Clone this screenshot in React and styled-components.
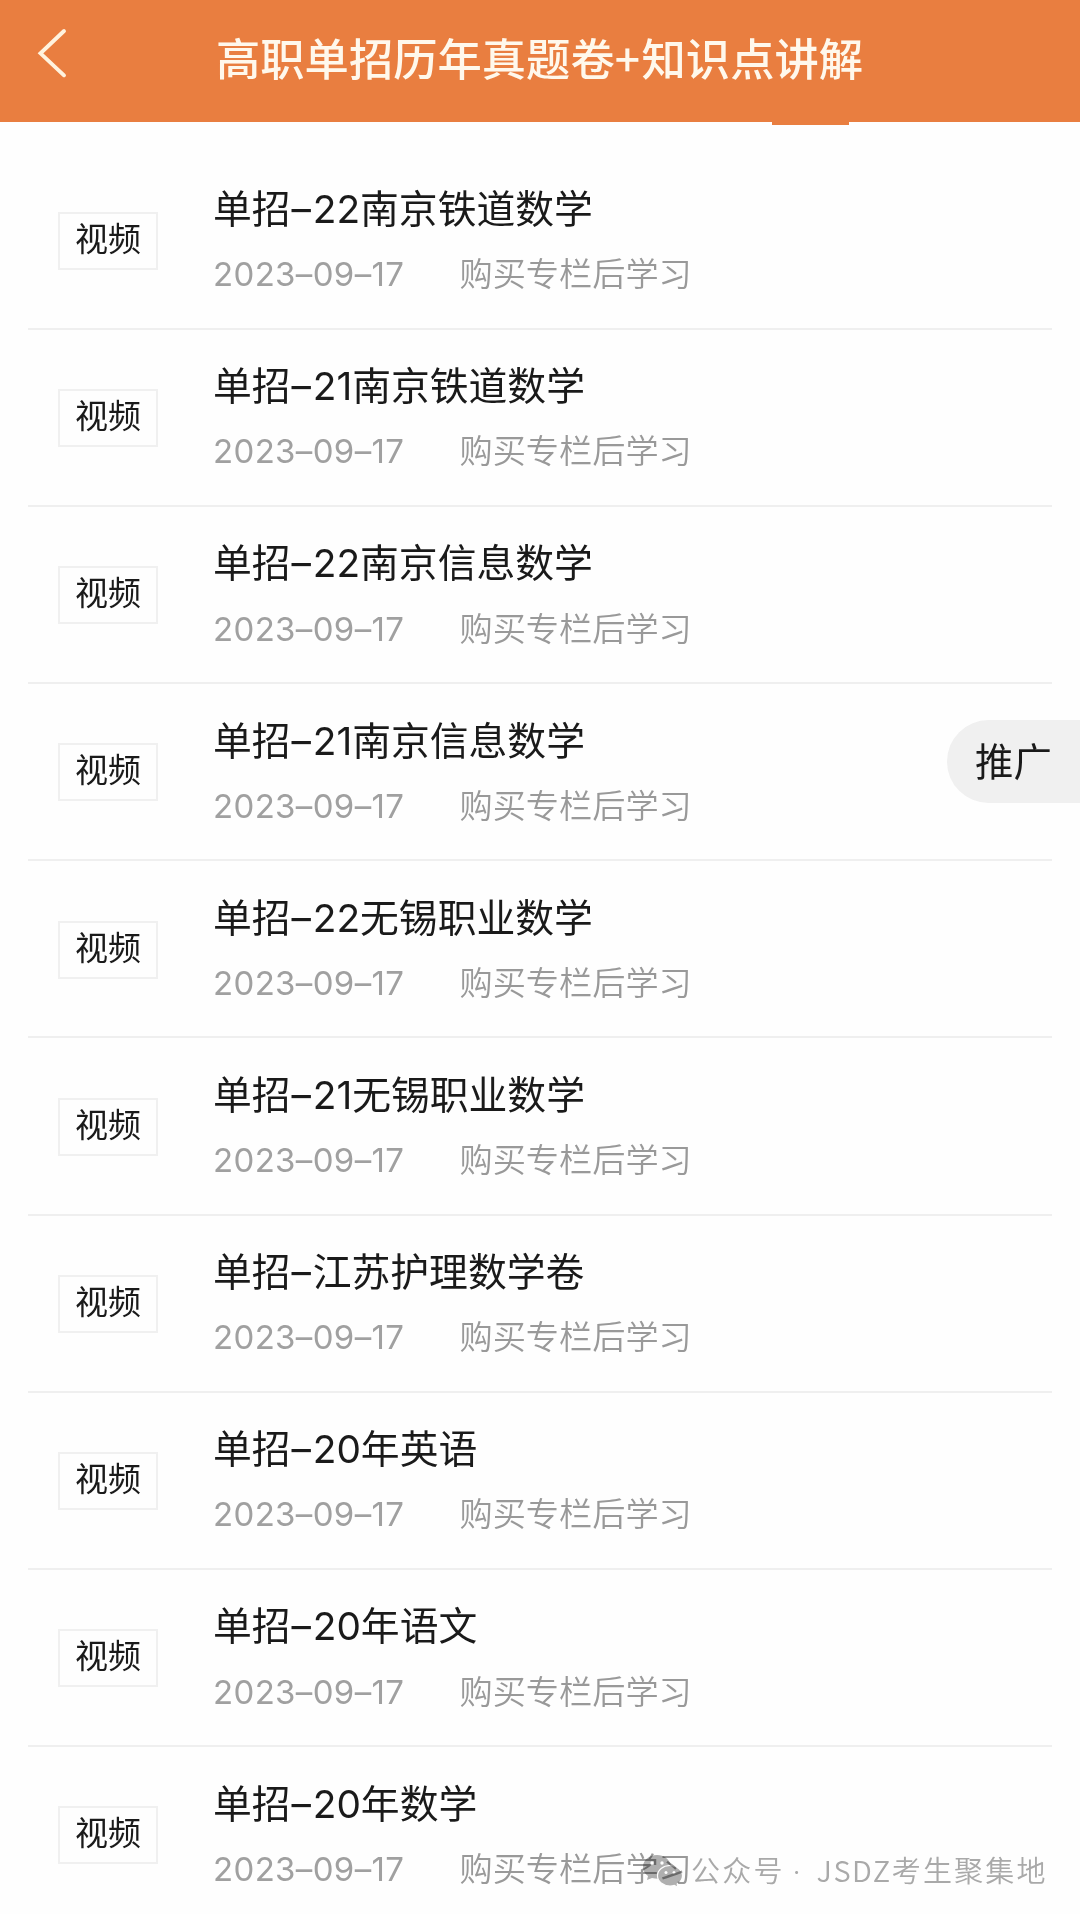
import React from "react";
import styled, { createGlobalStyle } from "styled-components";

const GlobalStyle = createGlobalStyle`
  * { box-sizing: border-box; }
  html, body { margin: 0; padding: 0; background: #fefefe; }
  body { font-family: Inter, "Noto Sans CJK SC", sans-serif; color: #1a1a1a; }
`;

const Page = styled.main`
  position: relative;
  width: 1080px;
  height: 1914px;
  overflow: hidden;
  background: #fefefe;
`;

const Header = styled.header`
  position: relative;
  display: flex;
  align-items: flex-start;
  height: 122px;
  background: #e97e40;
`;

const BackButton = styled.button`
  display: flex;
  width: 216px;
  padding: 28px 0 0 36px;
  border: 0;
  background: none;
`;

const PageTitle = styled.h1`
  margin: 0;
  padding-top: 25px;
  font-family: "Noto Sans CJK SC", sans-serif;
  font-size: 44.3px;
  font-weight: 500;
  line-height: 64px;
  white-space: nowrap;
  color: #fff8ec;
`;

const Plus = styled.span`
  letter-spacing: 1.6px;
`;

const TabIndicator = styled.span`
  position: absolute;
  left: 772px;
  top: 121px;
  width: 77px;
  height: 4px;
  background: #e97e40;
`;

const LessonList = styled.ul`
  margin: 0;
  padding: 30.4px 28px 0;
  list-style: none;
`;

const LessonRow = styled.li`
  display: flex;
  align-items: flex-start;
  height: 177.2px;
  padding-left: 30px;
  border-bottom: 2px solid #efefef;
`;

const Badge = styled.span`
  display: flex;
  justify-content: center;
  flex: none;
  width: 100px;
  height: 58px;
  margin: 59.4px 55px 0 0;
  border: 2px solid #f0f0f0;
  font-family: "Noto Sans CJK SC", sans-serif;
  font-size: 33px;
  line-height: 46px;
`;

const LessonInfo = styled.div`
  display: flex;
  flex-direction: column;
  padding-top: 30.6px;
  white-space: nowrap;
`;

const LessonTitle = styled.h2`
  margin: 0;
  font-size: 38.8px;
  font-weight: 400;
  line-height: 52px;
`;

const Dash = styled.span`
  margin-left: 1px;
  letter-spacing: 1.7px;
`;

const Meta = styled.div`
  display: flex;
  margin-top: 16.2px;
  font-size: 33.2px;
  font-weight: 350;
  line-height: 46px;
  color: #999;
`;

const DateText = styled.time`
  width: 246.5px;
  font-size: 33px;
  font-weight: 400;
  letter-spacing: 0.35px;
  color: #a0a0a0;
`;

const PromoButton = styled.button`
  position: absolute;
  top: 720px;
  right: 0;
  width: 133px;
  height: 83px;
  padding: 0 0 6px 28px;
  border: 0;
  border-radius: 42px 0 0 42px;
  background: #f0f0f0;
  font-family: "Noto Sans CJK SC", sans-serif;
  font-size: 38.4px;
  text-align: left;
  color: #1a1a1a;
`;

const Watermark = styled.div`
  position: absolute;
  left: 642px;
  top: 1847px;
  display: flex;
  align-items: center;
  font-family: "Noto Sans CJK SC", sans-serif;
  font-size: 29px;
  font-weight: 350;
  line-height: 44px;
  letter-spacing: 2.2px;
  white-space: pre;
  color: #aaa;
  mix-blend-mode: multiply;
`;

const WatermarkText = styled.span`
  margin-left: 8px;
`;

const Dot = styled.span`
  display: inline-block;
  width: 32px;
  padding-left: 8px;
  font-family: Inter, sans-serif;
`;

const Latin = styled.span`
  letter-spacing: 1.5px;
`;

const lessons = [
  "22南京铁道数学",
  "21南京铁道数学",
  "22南京信息数学",
  "21南京信息数学",
  "22无锡职业数学",
  "21无锡职业数学",
  "江苏护理数学卷",
  "20年英语",
  "20年语文",
  "20年数学",
];

function BackIcon() {
  return (
    <svg width="32" height="52" viewBox="0 0 32 52" fill="none">
      <path
        d="M28 3 4.500 25.300 28 47.300"
        stroke="#fff3df"
        strokeWidth="3.900"
        strokeLinecap="round"
      />
    </svg>
  );
}

function ChatIcon() {
  return (
    <svg width="41" height="34" viewBox="0 0 41 34">
      <path
        fill="#b0b0b0"
        d="M15 1C7 1 1 6 1 13c0 4 2 7 5 9l-1 4 5-2c2 .6 4 .8 6 .8h10V11h3C27 5 22 1 15 1Z"
      />
      <path
        fill="#b0b0b0"
        stroke="#fff"
        strokeWidth="1.200"
        d="M28 11.500c-7 0-12.500 4.500-12.500 10.300S21 32 28 32c1.500 0 3-.2 4.300-.6L36 33.300l-.8-3.200c3.200-2 5.300-4.800 5.300-8.300 0-5.800-5.500-10.300-12.500-10.300Z"
      />
      <g fill="#fff">
        <circle cx="10" cy="9" r="1.700" />
        <circle cx="20" cy="9" r="1.700" />
        <circle cx="24" cy="18.500" r="1.500" />
        <circle cx="32" cy="18.500" r="1.500" />
      </g>
    </svg>
  );
}

export default function App() {
  return (
    <Page>
      <GlobalStyle />
      <Header>
        <BackButton aria-label="返回">
          <BackIcon />
        </BackButton>
        <PageTitle>
          高职单招历年真题卷<Plus>+</Plus>知识点讲解
        </PageTitle>
        <TabIndicator />
      </Header>
      <LessonList>
        {lessons.map((name) => (
          <LessonRow key={name}>
            <Badge>视频</Badge>
            <LessonInfo>
              <LessonTitle>
                单招<Dash>–</Dash>{name}
              </LessonTitle>
              <Meta>
                <DateText>2023–09–17</DateText>
                <span>购买专栏后学习</span>
              </Meta>
            </LessonInfo>
          </LessonRow>
        ))}
      </LessonList>
      <PromoButton>推广</PromoButton>
      <Watermark>
        <ChatIcon />
        <WatermarkText>
          公众号<Dot>· </Dot><Latin>JSDZ</Latin>考生聚集地
        </WatermarkText>
      </Watermark>
    </Page>
  );
}
